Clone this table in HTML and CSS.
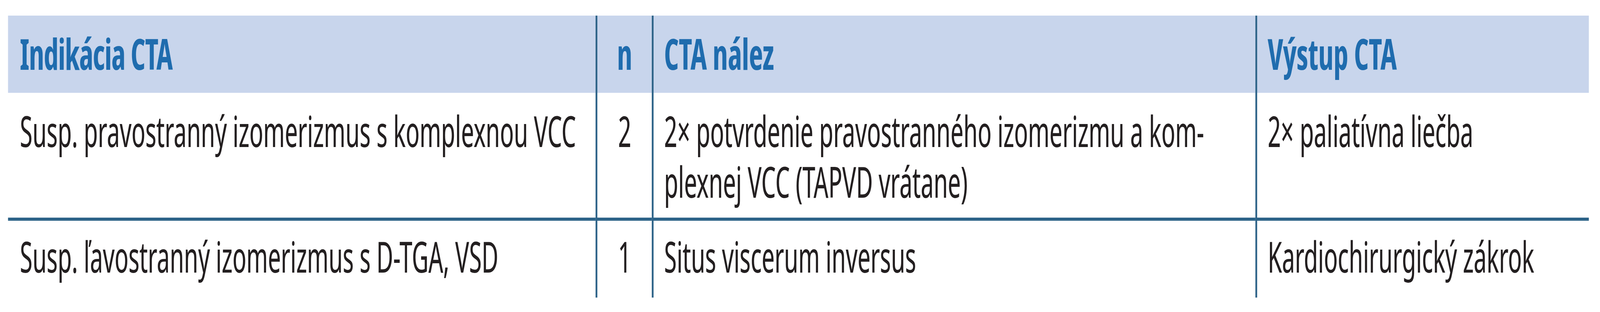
FILE: index.html
```html
<!DOCTYPE html>
<html lang="sk">
<head>
<meta charset="utf-8">
<title>Indikácia CTA</title>
<link rel="stylesheet" href="styles.css">
</head>
<body>
<div class="frame">
  <div class="page" id="page">
    <div class="table">
      <div class="cell head c1">Indikácia CTA</div>
      <div class="cell head c2">n</div>
      <div class="cell head c3">CTA nález</div>
      <div class="cell head c4">Výstup CTA</div>

      <div class="cell r1 c1">Susp. pravostranný izomerizmus s komplexnou VCC</div>
      <div class="cell r1 c2">2</div>
      <div class="cell r1 c3">2× potvrdenie pravostranného izomerizmu a kom-<br>plexnej VCC (TAPVD vrátane)</div>
      <div class="cell r1 c4">2× paliatívna liečba</div>

      <div class="cell r2 c1">Susp. ľavostranný izomerizmus s D-TGA, VSD</div>
      <div class="cell r2 c2">1</div>
      <div class="cell r2 c3">Situs viscerum inversus</div>
      <div class="cell r2 c4">Kardiochirurgický zákrok</div>
    </div>
  </div>
</div>
<script src="app.js"></script>
</body>
</html>
```

FILE: styles.css
```css
html, body {
  margin: 0;
  padding: 0;
  background: #ffffff;
  overflow: hidden;
}

.frame {
  width: 100vw;
  height: 100vh;
  overflow: hidden;
}

.page {
  box-sizing: border-box;
  width: 7173px;
  height: 800px;
  padding: 40px 0 0 36px;
  transform: scaleX(var(--sx, 1));
  transform-origin: 0 0;
  font-family: "Noto Sans Display", "Noto Sans", sans-serif;
  font-size: 110px;
  line-height: 130px;
  letter-spacing: -0.5px;
  color: #231f20;
}

.table {
  display: grid;
  grid-template-columns: 2634px 252px 2706px 1495px;
  grid-template-rows: 198px 320px 205px;
  width: 7087px;
}

.cell {
  box-sizing: border-box;
  white-space: nowrap;
  overflow: hidden;
  border-color: #2d6388;
  border-style: solid;
  border-width: 0;
}

.c1 { padding-left: 53px; }
.c2 { text-align: center; border-left-width: 8px; }
.c3 { padding-left: 47px; border-left-width: 8px; }
.c4 { padding-left: 47px; border-left-width: 8px; }

.head {
  background: #c8d5ec;
  color: #1f6cae;
  font-weight: bold;
  padding-top: 31px;
}

.head.c1 { letter-spacing: -2px; }

.r1 { padding-top: 31px; }

.r2 {
  border-top-width: 8px;
  padding-top: 25px;
}
```

FILE: app.js
```js
(function () {
  var DESIGN_WIDTH = 7173;
  function fit() {
    var s = Math.min(1, window.innerWidth / DESIGN_WIDTH);
    document.documentElement.style.setProperty('--sx', String(s));
  }
  fit();
  window.addEventListener('resize', fit);
})();
```
